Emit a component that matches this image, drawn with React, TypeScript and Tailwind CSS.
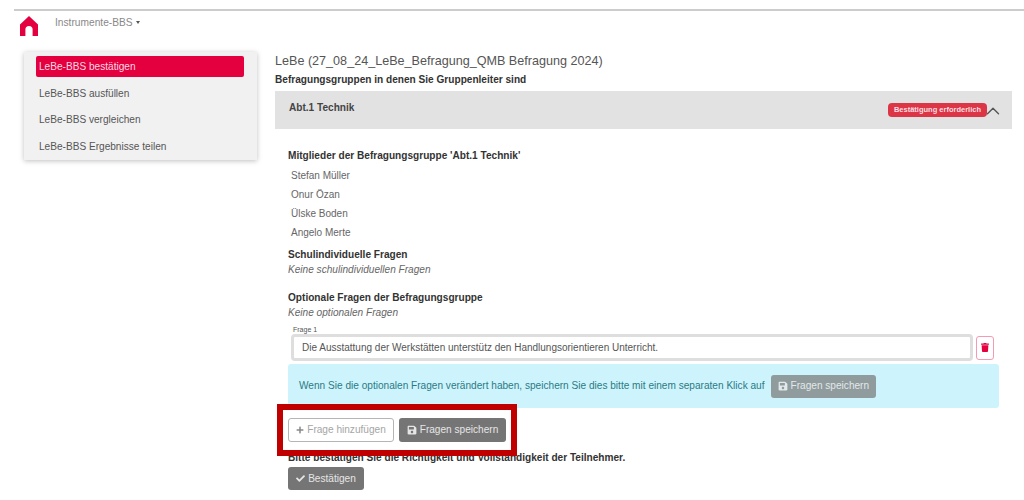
import React from 'react';
import { FaCheck, FaPlus, FaSave, FaTrash } from 'react-icons/fa';
import { ChevronUp } from 'lucide-react';

const menuItems = ['LeBe-BBS ausfüllen', 'LeBe-BBS vergleichen', 'LeBe-BBS Ergebnisse teilen'];
const members = ['Stefan Müller', 'Onur Özan', 'Ülske Boden', 'Angelo Merte'];

const App: React.FC = () => {
  return (
    <div className="relative w-[1024px] h-[500px] overflow-hidden bg-white font-['Liberation_Sans',Arial,sans-serif] text-[#555]">
      {/* Top bar */}
      <div className="ml-[14px] mt-[9px] border-t-2 border-[#cccccc]" />
      <div className="flex h-[41px] items-start">
        <svg viewBox="0 0 18 20" className="ml-[20px] mt-[5px] h-[20px] w-[18px] fill-[#e4003f]">
          <path d="M9 0 18 8.5V20H12.6V13.5A3.6 3.6 0 0 0 5.4 13.5V20H0V8.5Z" />
        </svg>
        <div className="ml-[17px] mt-[4px] flex items-center gap-[3px] text-[10.2px] text-[#888]">
          Instrumente-BBS
          <span className="mb-[1px] h-0 w-0 border-x-[2.5px] border-t-[3px] border-x-transparent border-t-[#555]" />
        </div>
      </div>

      <div className="flex items-start">
        {/* Sidebar */}
        <div className="ml-[24px] flex h-[108px] w-[233px] flex-col bg-[#f1f1f1] pl-[12px] pr-[13px] pt-[4px] shadow-[0_1px_5px_rgba(0,0,0,0.25)]">
          <div className="flex h-[21px] items-center rounded-[2px] bg-[#e4003f] px-[3px] text-[10.1px] text-[#ffd9e3]">
            LeBe-BBS bestätigen
          </div>
          {menuItems.map((item) => (
            <div key={item} className="mt-[6px] flex h-[20.67px] items-center px-[3px] text-[10.1px] text-[#555]">
              {item}
            </div>
          ))}
        </div>

        {/* Main column */}
        <div className="ml-[18px] w-[737px]">
          <h1 className="text-[12.6px] leading-[19px] text-[#555]">LeBe (27_08_24_LeBe_Befragung_QMB Befragung 2024)</h1>
          <p className="mt-[2px] text-[10.1px] font-bold leading-[14px] text-[#333]">Befragungsgruppen in denen Sie Gruppenleiter sind</p>

          <div className="mt-[4px] flex h-[38px] justify-between bg-[#e2e2e2] pl-[14px] pr-[8px]">
            <span className="pt-[11px] text-[10.1px] font-bold leading-[12px] text-[#444]">Abt.1 Technik</span>
            <div className="flex items-start pt-[12px]">
              <span className="flex h-[14px] items-center rounded-[4px] bg-[#dc3545] px-[6px] text-[7.5px] font-bold text-[#fbdde0]">Bestätigung erforderlich</span>
              <ChevronUp className="-ml-[5px] -mt-[3px] h-[22px] w-[22px] text-[#555]" strokeWidth={1.5} />
            </div>
          </div>

          <div className="pl-[13px]">
            <h2 className="mt-[20px] text-[10.1px] font-bold leading-[14px] text-[#333]">Mitglieder der Befragungsgruppe 'Abt.1 Technik'</h2>
            <div className="mt-[6px] flex flex-col gap-[5px] pl-[3px]">
              {members.map((name) => (
                <div key={name} className="h-[14px] text-[10px] leading-[14px] text-[#666]">{name}</div>
              ))}
            </div>

            <h2 className="mt-[8px] text-[10.1px] font-bold leading-[14px] text-[#333]">Schulindividuelle Fragen</h2>
            <p className="mt-[1px] text-[10.1px] italic leading-[14px] text-[#666]">Keine schulindividuellen Fragen</p>

            <h2 className="mt-[14px] text-[10.1px] font-bold leading-[14px] text-[#333]">Optionale Fragen der Befragungsgruppe</h2>
            <p className="mt-[1px] text-[10.1px] italic leading-[14px] text-[#666]">Keine optionalen Fragen</p>
          </div>

          <div className="pl-[16px]">
            <div className="mt-[5px] pl-[2px] text-[7px] leading-[9px] text-[#555]">Frage 1</div>
            <div className="flex items-center gap-[3px]">
              <div className="flex h-[27px] w-[682px] items-center rounded-[4px] border-[3px] border-[#dedede] bg-white pl-[8px] text-[10px] text-[#555]">
                Die Ausstattung der Werkstätten unterstütz den Handlungsorientieren Unterricht.
              </div>
              <div className="flex h-[24px] w-[18px] items-center justify-center rounded-[3px] border border-[#f59ab5] bg-white">
                <FaTrash className="h-[9px] w-[8px] text-[#e4003f]" />
              </div>
            </div>
          </div>

          <div className="ml-[13px] mt-[3px] flex h-[44px] w-[711px] items-center gap-[6px] rounded-[3px] bg-[#cdf4fc] pl-[11px] text-[10.1px] text-[#2b7a85]">
            Wenn Sie die optionalen Fragen verändert haben, speichern Sie dies bitte mit einem separaten Klick auf
            <span className="flex h-[23px] items-center gap-[3px] rounded-[3px] bg-[#8f9b9d] px-[7px] text-[#e3e9ea]">
              <FaSave className="h-[10px] w-[10px]" /> Fragen speichern
            </span>
          </div>

          <div className="mt-[10px] flex gap-[5px] pl-[13px]">
            <span className="flex h-[24px] w-[106px] items-center justify-center gap-[3px] rounded-[3px] border border-[#b5b5b5] bg-white text-[10.1px] text-[#a5a5a5]">
              <FaPlus className="h-[8px] w-[8px] text-[#888]" /> Frage hinzufügen
            </span>
            <span className="flex h-[24px] w-[107px] items-center justify-center gap-[3px] rounded-[3px] bg-[#757575] text-[10.1px] text-[#e6e6e6]">
              <FaSave className="h-[10px] w-[10px]" /> Fragen speichern
            </span>
          </div>

          <div className="pl-[13px]">
            <p className="mt-[9px] text-[10.1px] font-bold leading-[13px] text-[#333]">Bitte bestätigen Sie die Richtigkeit und Vollständigkeit der Teilnehmer.</p>
            <span className="mt-[3px] flex h-[23px] w-[76px] items-center justify-center gap-[3px] rounded-[3px] bg-[#757575] text-[10.1px] text-[#e6e6e6]">
              <FaCheck className="h-[9px] w-[9px]" /> Bestätigen
            </span>
          </div>
        </div>
      </div>

      {/* Red annotation frame over the buttons */}
      <div className="absolute left-[277px] top-[404px] h-[52px] w-[240px] border-[6px] border-[#c00000]" />
    </div>
  );
};

export default App;
